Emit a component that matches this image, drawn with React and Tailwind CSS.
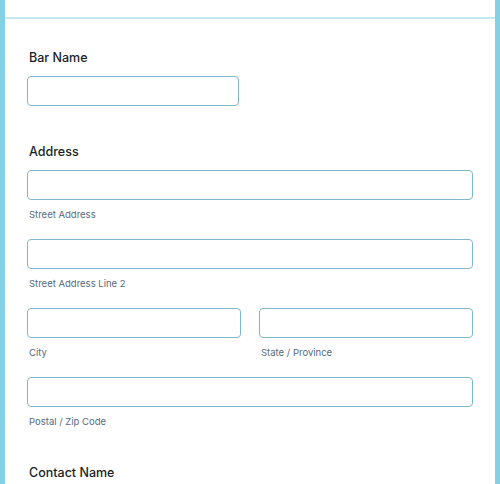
const font = { fontFamily: 'Inter, "Liberation Sans", sans-serif' }

function Field({ className = '', sub }) {
  return (
    <div className={className}>
      <div className="h-[30px] rounded-[4px] border border-[#7fb9c9] bg-white" />
      {sub && <div className="mt-[8px] pl-[2px] text-[9.5px] leading-[14px] text-[#566a7d]">{sub}</div>}
    </div>
  )
}

export default function App() {
  return (
    <div className="h-[484px] w-[500px] overflow-hidden bg-white" style={font}>
      <div className="flex h-full border-x-[5px] border-[#84d0e4]">
        <div className="flex-1">
          <div className="h-[17px]" />
          <div className="h-[2px] bg-[#c6e7f0]" />
          <div className="px-[22px] pt-[28px]">
            <div className="pl-[2px] pt-[1px] text-[12.5px] font-medium leading-[20px] text-[#1a1f26]">Bar Name</div>
            <Field className="mt-[8px] w-[212px]" />

            <div className="mt-[35px] pl-[2px] pt-[1px] text-[12.5px] font-medium leading-[20px] text-[#1a1f26]">Address</div>
            <Field className="mt-[8px]" sub="Street Address" />
            <Field className="mt-[17px]" sub="Street Address Line 2" />
            <div className="mt-[17px] grid grid-cols-2 gap-[18px]">
              <Field sub="City" />
              <Field sub="State / Province" />
            </div>
            <Field className="mt-[17px]" sub="Postal / Zip Code" />

            <div className="mt-[33px] pl-[2px] pt-[1px] text-[12.5px] font-medium leading-[20px] text-[#1a1f26]">Contact Name</div>
          </div>
        </div>
      </div>
    </div>
  )
}
